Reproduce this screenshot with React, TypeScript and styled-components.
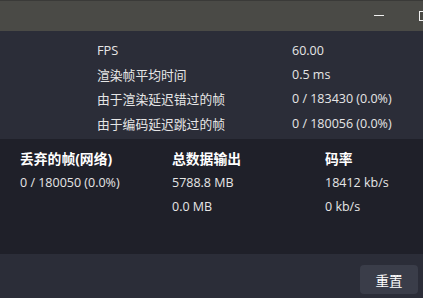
import React from 'react';
import styled, { createGlobalStyle } from 'styled-components';

const GlobalStyle = createGlobalStyle`
  html, body {
    margin: 0;
    padding: 0;
    background: #2b2d38;
    overflow: hidden;
  }
  body {
    font-family: "Open Sans", "Noto Sans CJK SC", sans-serif;
    color: #e6e6e6;
  }
`;

const Window = styled.div`
  width: 423px;
  height: 298px;
  display: flex;
  flex-direction: column;
  overflow: hidden;
  font-size: 12.5px;
`;

const TitleBar = styled.div`
  height: 30px;
  flex: none;
  background: #4a4a46;
  border-top: 1px solid #3a3a38;
  display: flex;
  justify-content: flex-end;
  align-items: center;
  overflow: hidden;
`;

const Minimize = styled.div`
  width: 46px;
  height: 30px;
  flex: none;
  margin-right: 17px;
  display: flex;
  align-items: center;
  justify-content: center;
  &::after {
    content: '';
    display: block;
    width: 10px;
    height: 1px;
    margin-top: -2px;
    background: #f0f0f0;
  }
`;

const Maximize = styled.div`
  width: 4px;
  height: 30px;
  flex: none;
  display: flex;
  align-items: center;
  overflow: hidden;
  &::after {
    content: '';
    flex: none;
    width: 8px;
    height: 8px;
    margin-top: -1px;
    border: 1px solid #f0f0f0;
  }
`;

const StatsPanel = styled.div`
  height: 108px;
  flex: none;
  background: #2b2d38;
  box-sizing: border-box;
  padding: 7px 0 0 97px;
  display: grid;
  grid-template-columns: 195px 1fr;
  grid-auto-rows: 24.3px;
  align-items: center;
`;

const NetPanel = styled.div`
  height: 115px;
  flex: none;
  background: #1f2029;
  box-sizing: border-box;
  padding: 7px 0 0 20px;
  display: grid;
  grid-template-columns: 152px 153px 1fr;
  grid-auto-rows: 24px;
  align-items: center;
`;

const Cell = styled.div<{ $bold?: boolean; $label?: boolean }>`
  white-space: nowrap;
  font-weight: ${p => (p.$bold ? 700 : 400)};
  font-size: ${p => (p.$bold ? '13.8px' : p.$label ? '12.8px' : '12.5px')};
  color: ${p => (p.$bold ? '#ffffff' : '#e6e6e6')};
`;

const Footer = styled.div`
  flex: 1;
  background: #2b2d38;
  display: flex;
  justify-content: flex-end;
  align-items: flex-start;
  padding: 11px 5px 0 0;
`;

const Button = styled.button`
  width: 58px;
  height: 29px;
  border: none;
  border-radius: 4px;
  background: #3a3d49;
  color: #ffffff;
  font-family: "Noto Sans CJK SC", sans-serif;
  font-size: 13.5px;
  padding: 0;
`;

const stats = [
  ['FPS', '60.00'],
  ['渲染帧平均时间', '0.5 ms'],
  ['由于渲染延迟错过的帧', '0 / 183430 (0.0%)'],
  ['由于编码延迟跳过的帧', '0 / 180056 (0.0%)'],
];

export default function App() {
  return (
    <Window>
      <GlobalStyle />
      <TitleBar>
        <Minimize />
        <Maximize />
      </TitleBar>
      <StatsPanel>
        {stats.map(([label, value]) => (
          <React.Fragment key={label}>
            <Cell $label>{label}</Cell>
            <Cell>{value}</Cell>
          </React.Fragment>
        ))}
      </StatsPanel>
      <NetPanel>
        <Cell $bold>丢弃的帧(网络)</Cell>
        <Cell $bold>总数据输出</Cell>
        <Cell $bold>码率</Cell>
        <Cell>0 / 180050 (0.0%)</Cell>
        <Cell>5788.8 MB</Cell>
        <Cell>18412 kb/s</Cell>
        <Cell />
        <Cell>0.0 MB</Cell>
        <Cell>0 kb/s</Cell>
      </NetPanel>
      <Footer>
        <Button>重置</Button>
      </Footer>
    </Window>
  );
}
